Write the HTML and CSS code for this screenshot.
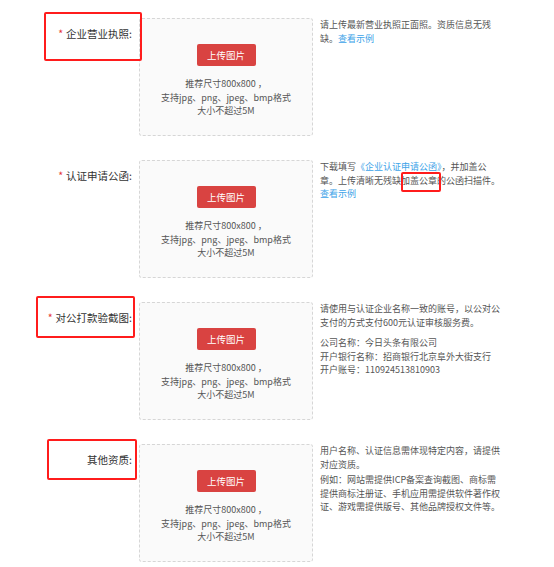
FILE: index.html
```html
<!DOCTYPE html>
<html lang="zh-CN">
<head>
    <meta charset="UTF-8">
    <title>资质上传</title>
    <link rel="stylesheet" href="styles.css">
</head>
<body>
    <div class="form">
        <!-- 企业营业执照 -->
        <div class="row">
            <div class="label"><span class="req">*</span>企业营业执照:</div>
            <div class="upload">
                <a class="btn" href="#">上传图片</a>
                <p class="hint">推荐尺寸800x800 ，<br>支持jpg、png、jpeg、bmp格式<br>大小不超过5M</p>
            </div>
            <div class="desc">
                <p>请上传最新营业执照正面照。资质信息无残缺。<a href="#">查看示例</a></p>
            </div>
            <span class="mark mark-1"></span>
        </div>

        <!-- 认证申请公函 -->
        <div class="row">
            <div class="label"><span class="req">*</span>认证申请公函:</div>
            <div class="upload">
                <a class="btn" href="#">上传图片</a>
                <p class="hint">推荐尺寸800x800 ，<br>支持jpg、png、jpeg、bmp格式<br>大小不超过5M</p>
            </div>
            <div class="desc">
                <p>下载填写<a href="#">《企业认证申请公函》</a>，并加盖公章。上传清晰无残缺加盖公章的公函扫描件。<br><a href="#">查看示例</a></p>
            </div>
            <span class="mark mark-2"></span>
        </div>

        <!-- 对公打款验截图 -->
        <div class="row">
            <div class="label"><span class="req">*</span>对公打款验截图:</div>
            <div class="upload">
                <a class="btn" href="#">上传图片</a>
                <p class="hint">推荐尺寸800x800 ，<br>支持jpg、png、jpeg、bmp格式<br>大小不超过5M</p>
            </div>
            <div class="desc">
                <p>请使用与认证企业名称一致的账号，以公对公支付的方式支付600元认证审核服务费。</p>
                <p class="gap">公司名称：今日头条有限公司<br>开户银行名称：招商银行北京阜外大街支行<br>开户账号：110924513810903</p>
            </div>
            <span class="mark mark-3"></span>
        </div>

        <!-- 其他资质 -->
        <div class="row">
            <div class="label">其他资质:</div>
            <div class="upload">
                <a class="btn" href="#">上传图片</a>
                <p class="hint">推荐尺寸800x800 ，<br>支持jpg、png、jpeg、bmp格式<br>大小不超过5M</p>
            </div>
            <div class="desc">
                <p>用户名称、认证信息需体现特定内容，请提供对应资质。</p>
                <p class="gap-s">例如：网站需提供ICP备案查询截图、商标需提供商标注册证、手机应用需提供软件著作权证、游戏需提供版号、其他品牌授权文件等。</p>
            </div>
            <span class="mark mark-4"></span>
        </div>
    </div>
</body>
</html>
```

FILE: styles.css
```css
/* 基础 */
body {
    margin: 0;
    padding: 18px 0 0;
    background: #fff;
    color: #555;
    font-family: "Microsoft YaHei", "Noto Sans CJK SC", sans-serif;
}

p {
    margin: 0;
}

a {
    color: #3ca3e8;
    text-decoration: none;
}

.row {
    position: relative;
    display: flex;
    align-items: flex-start;
    margin-bottom: 24px;
}

/* 左侧标签 */
.label {
    width: 134px;
    padding-top: 9px;
    padding-right: 2px;
    box-sizing: border-box;
    text-align: right;
    font-size: 10.5px;
    line-height: 13px;
    color: #333;
}

.req {
    color: #e53935;
    margin-right: 3px;
}

/* 上传框 */
.upload {
    width: 174px;
    height: 118px;
    margin-left: 5px;
    box-sizing: border-box;
    border: 1px dashed #d6d6d6;
    border-radius: 3px;
    background: #fafafa;
    text-align: center;
    padding-top: 21px;
}

.btn {
    display: inline-block;
    width: 59px;
    height: 22px;
    line-height: 22px;
    background-color: #d94341;
    color: #fff;
    font-size: 9.5px;
    border-radius: 2px;
}

.hint {
    margin-top: 11px;
    font-size: 9px;
    line-height: 13.5px;
    color: #555;
}

/* 右侧说明 */
.desc {
    width: 182px;
    margin-left: 7px;
    font-size: 9px;
    line-height: 13.5px;
    color: #555;
}

.desc .gap {
    margin-top: 7px;
}

.desc .gap-s {
    margin-top: 2px;
}

/* 红色标注框 */
.mark {
    position: absolute;
    border: 2px solid #ff1c1c;
    border-radius: 2px;
    box-sizing: border-box;
}

.mark-1 {
    left: 44px;
    top: -6px;
    width: 98px;
    height: 49px;
}

.mark-2 {
    left: 401px;
    top: 12px;
    width: 40px;
    height: 20px;
}

.mark-3 {
    left: 36px;
    top: -6px;
    width: 99px;
    height: 42px;
}

.mark-4 {
    left: 47px;
    top: -5px;
    width: 90px;
    height: 41px;
}
```
